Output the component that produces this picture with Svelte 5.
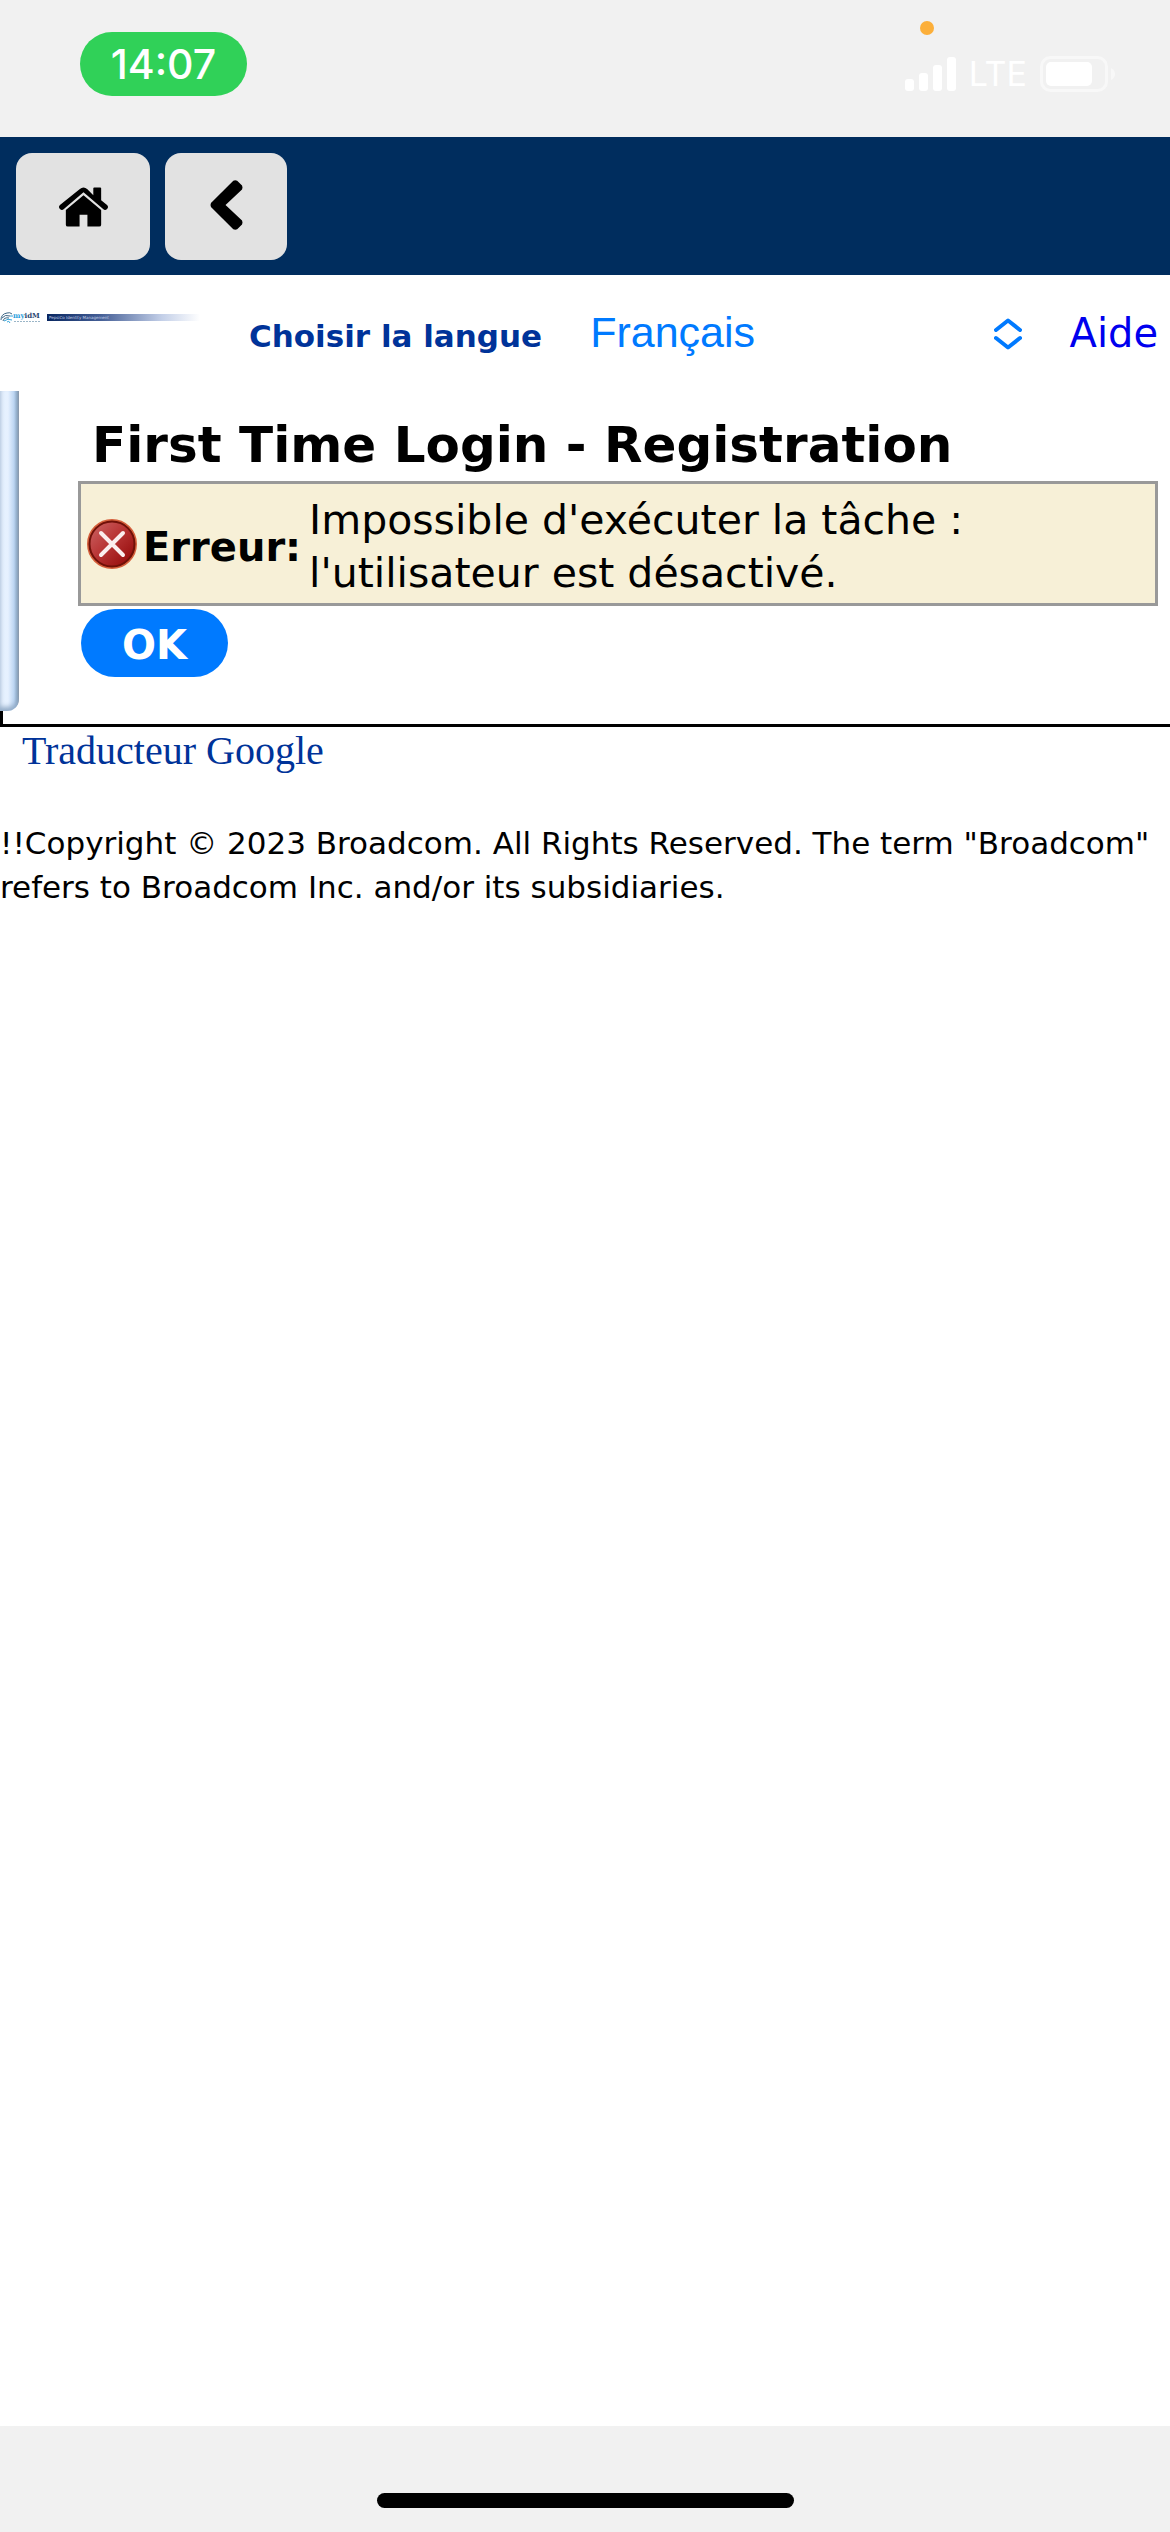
<script>
  let language = $state('fr');
  const languages = [
    { code: 'fr', name: 'Français' },
    { code: 'en', name: 'English' },
    { code: 'es', name: 'Español' }
  ];
</script>

<div class="screen">
  <header class="status">
    <span class="clock">14:07</span>
    <div class="indicators">
      <span class="mic-dot"></span>
      <svg class="signal" viewBox="0 0 51 34" aria-hidden="true">
        <rect x="0" y="22" width="9" height="12" rx="3" />
        <rect x="14" y="16" width="9" height="18" rx="3" />
        <rect x="28" y="8" width="9" height="26" rx="3" />
        <rect x="42" y="0" width="9" height="34" rx="3" />
      </svg>
      <span class="network">LTE</span>
      <svg class="battery" viewBox="0 0 75 36" aria-hidden="true">
        <rect x="1.5" y="1.5" width="65" height="33" rx="9" fill="none" stroke="#f8f8f8" stroke-width="3" />
        <rect x="6" y="6" width="46" height="24" rx="5" fill="#fff" />
        <path d="M71 12 Q75 14 75 18 Q75 22 71 24Z" fill="#f8f8f8" />
      </svg>
    </div>
  </header>

  <nav class="toolbar">
    <button class="tool home" aria-label="Accueil">
      <svg viewBox="0 0 52 42" aria-hidden="true">
        <path d="M26 9 L44 24 V39 Q44 41 42 41 H30 V29 H22 V41 H10 Q8 41 8 39 V24Z" />
        <path d="M36 9 V2 Q36 1 37 1 H43 Q44 1 44 2 V14 L50 19 Q52 21 50 23 Q48 25 46 23 L26 6 L6 23 Q4 25 2 23 Q0 21 2 19 L22 3 Q26 -1 30 3Z" />
      </svg>
    </button>
    <button class="tool back" aria-label="Retour">
      <svg viewBox="0 0 34 52" aria-hidden="true">
        <path d="M24 1 Q26 0 28 1 L33 6 Q34 8 33 10 L16 26 L33 42 Q34 44 33 46 L28 51 Q26 52 24 51 L1 28 Q0 26 1 24Z" />
      </svg>
    </button>
  </nav>

  <div class="masthead">
    <svg class="logo" viewBox="0 -4 200 24" role="img" aria-label="myidM – PepsiCo Identity Management">
      <defs>
        <linearGradient id="band">
          <stop offset="0" stop-color="#082660" />
          <stop offset=".35" stop-color="#455f96" />
          <stop offset=".75" stop-color="#c3cfe8" />
          <stop offset="1" stop-color="#fff" />
        </linearGradient>
      </defs>
      <g fill="none" stroke-width="1">
        <path d="M1 8 Q1 2 7 1 Q10 0 12 2 M2 6 Q5 2 10 4 M3 9 Q4 5 9 6" stroke="#3c6585" />
        <path d="M4 9 Q8 6 12 8 M7 10 Q9 8 10 11 M10 4 H13" stroke="#35a5da" />
      </g>
      <text x="13" y="6" class="brand"><tspan fill="#2ba0dc">my</tspan><tspan fill="#2b4770">idM</tspan></text>
      <path d="M14 9.500 H41" stroke="#9bb6c8" stroke-dasharray="2 1" />
      <rect x="47" y="2" width="153" height="7" fill="url(#band)" />
      <text x="49" y="7" class="tagline">PepsiCo Identity Management</text>
    </svg>
    <label class="lang-label" for="language">Choisir la langue</label>
    <div class="picker">
      <select id="language" bind:value={language}>
        {#each languages as item}
          <option value={item.code}>{item.name}</option>
        {/each}
      </select>
      <svg class="chevrons" viewBox="0 0 28 32" aria-hidden="true">
        <path d="M2 12 L14 2.500 L26 12 M2 20 L14 29.500 L26 20" />
      </svg>
    </div>
    <a class="help" href="#aide">Aide</a>
  </div>

  <main class="task">
    <div class="side"><div class="side-panel"></div></div>
    <section class="content">
      <h1>First Time Login - Registration</h1>
      <div class="alert" role="alert">
        <svg class="error-icon" viewBox="0 0 50 50" aria-hidden="true">
          <defs>
            <linearGradient id="ball" x1="0" y1="0" x2="1" y2="1">
              <stop offset="0" stop-color="#cf6b6b" />
              <stop offset=".45" stop-color="#b93636" />
              <stop offset="1" stop-color="#8c0000" />
            </linearGradient>
          </defs>
          <circle cx="25" cy="25" r="24" fill="url(#ball)" stroke="#d5603c" stroke-width="2" />
          <circle cx="25" cy="25" r="22.500" fill="none" stroke="#701008" stroke-width="2" />
          <path d="M14 14 L36 36 M36 14 L14 36" stroke="#fbeeee" stroke-width="4" stroke-linecap="round" />
        </svg>
        <strong>Erreur:</strong>
        <p>Impossible d'exécuter la tâche :<br />l'utilisateur est désactivé.</p>
      </div>
      <button class="ok">OK</button>
    </section>
  </main>

  <footer class="footer">
    <a class="translate" href="#traducteur">Traducteur Google</a>
    <p>!!Copyright © 2023 Broadcom. All Rights Reserved. The term "Broadcom"<br />refers to Broadcom Inc. and/or its subsidiaries.</p>
  </footer>

  <div class="gesture"><span></span></div>
</div>

<style>
  :global(body) {
    background: #fff;
  }
  .screen {
    display: flex;
    flex-direction: column;
    min-height: 100vh;
    font-family: Verdana, 'DejaVu Sans', sans-serif;
    color: #000;
  }
  button {
    border: 0;
    padding: 0;
    font-family: inherit;
  }
  a {
    text-decoration: none;
  }
  .status {
    display: flex;
    justify-content: space-between;
    align-items: flex-start;
    height: 137px;
    box-sizing: border-box;
    padding: 32px 55px 0 80px;
    background: #f1f1f1;
    font-family: Inter, sans-serif;
  }
  .clock {
    width: 167px;
    height: 64px;
    line-height: 64px;
    border-radius: 32px;
    background: #30d158;
    color: #fff;
    font-size: 41px;
    font-weight: 500;
    text-align: center;
  }
  .indicators {
    position: relative;
    display: flex;
    align-items: center;
    gap: 13px;
    height: 36px;
    margin-top: 24px;
    color: #fff;
  }
  .mic-dot {
    position: absolute;
    left: 15px;
    top: -35px;
    width: 14px;
    height: 14px;
    border-radius: 50%;
    background: #fcaf3a;
  }
  .signal {
    width: 51px;
    height: 34px;
    fill: #fff;
  }
  .network {
    font-size: 34px;
    line-height: 36px;
  }
  .battery {
    width: 75px;
    height: 36px;
  }
  .toolbar {
    display: flex;
    gap: 15px;
    padding: 16px 16px 15px;
    background: #002d5e;
  }
  .tool {
    display: flex;
    align-items: center;
    justify-content: center;
    height: 107px;
    border-radius: 16px;
    background: #e2e2e2;
  }
  .home {
    width: 134px;
  }
  .home svg {
    width: 51px;
    height: 42px;
  }
  .back {
    width: 122px;
  }
  .back svg {
    width: 33px;
    height: 52px;
    margin-bottom: 4px;
  }
  .masthead {
    display: flex;
    align-items: baseline;
    height: 116px;
    box-sizing: border-box;
    padding: 33px 12px 0 0;
  }
  .logo {
    flex: none;
    align-self: flex-start;
    width: 200px;
    height: 24px;
  }
  .brand {
    font: bold 7px 'DejaVu Serif', serif;
  }
  .tagline {
    font: 4px 'DejaVu Sans', sans-serif;
    fill: #c6d2e8;
  }
  .lang-label {
    margin-left: 49px;
    color: #039;
    font-size: 31px;
    font-weight: bold;
    white-space: nowrap;
  }
  .picker {
    position: relative;
    flex: 1;
    margin: 0 40px 0 48px;
  }
  select {
    width: 100%;
    appearance: none;
    border: 0;
    padding: 0;
    background: transparent;
    color: #007aff;
    font: 43px 'Liberation Sans', sans-serif;
  }
  .chevrons {
    position: absolute;
    right: 8px;
    top: 10px;
    width: 28px;
    height: 32px;
    fill: none;
    stroke: #007aff;
    stroke-width: 4;
    stroke-linecap: round;
    stroke-linejoin: round;
    pointer-events: none;
  }
  .help {
    color: #0000ee;
    font-size: 40px;
  }
  .task {
    display: flex;
    height: 336px;
    box-sizing: border-box;
    border-bottom: 3px solid #000;
  }
  .side {
    flex: none;
    width: 19px;
    height: 333px;
    box-sizing: border-box;
    background: linear-gradient(#000, #000) 0 100% / 3px 14px no-repeat;
  }
  .side-panel {
    height: 320px;
    border-radius: 0 0 12px 0;
    background: linear-gradient(90deg, #e8f2ff, #e6f1ff 8px, #bcd5f2 14px, #8fabc8 17px, #808890 19px);
    box-shadow: inset 0 -4px 5px #93acc8;
  }
  .content {
    flex: 1;
    padding: 24px 12px 0 59px;
  }
  h1 {
    margin: 0 0 6px 14px;
    font-size: 50px;
    line-height: 60px;
    white-space: nowrap;
  }
  .alert {
    display: flex;
    align-items: center;
    height: 125px;
    box-sizing: border-box;
    border: 3px solid #999;
    padding: 0 6px;
    background: #f7f0d7;
    font-size: 40px;
    line-height: 53px;
  }
  .error-icon {
    flex: none;
    width: 50px;
    height: 50px;
    margin-right: 6px;
  }
  .alert strong {
    padding-top: 8px;
    margin-right: 8px;
  }
  .alert p {
    margin: 0;
    padding-top: 6px;
    font-size: 41px;
    white-space: nowrap;
  }
  .ok {
    width: 147px;
    height: 68px;
    margin: 3px 0 0 3px;
    padding-top: 4px;
    border-radius: 34px;
    background: #007aff;
    color: #fff;
    font-size: 40px;
    font-weight: bold;
  }
  .footer {
    flex: 1;
  }
  .translate {
    display: block;
    padding: 0 22px;
    color: #039;
    font: 40px/48px 'Liberation Serif', serif;
  }
  .footer p {
    margin: 46px 0 0;
    font-size: 31px;
    line-height: 44px;
    white-space: nowrap;
  }
  .gesture {
    display: flex;
    justify-content: center;
    align-items: flex-end;
    height: 106px;
    box-sizing: border-box;
    padding-bottom: 24px;
    background: #f1f1f1;
  }
  .gesture span {
    width: 417px;
    height: 15px;
    border-radius: 8px;
    background: #000;
  }
</style>
